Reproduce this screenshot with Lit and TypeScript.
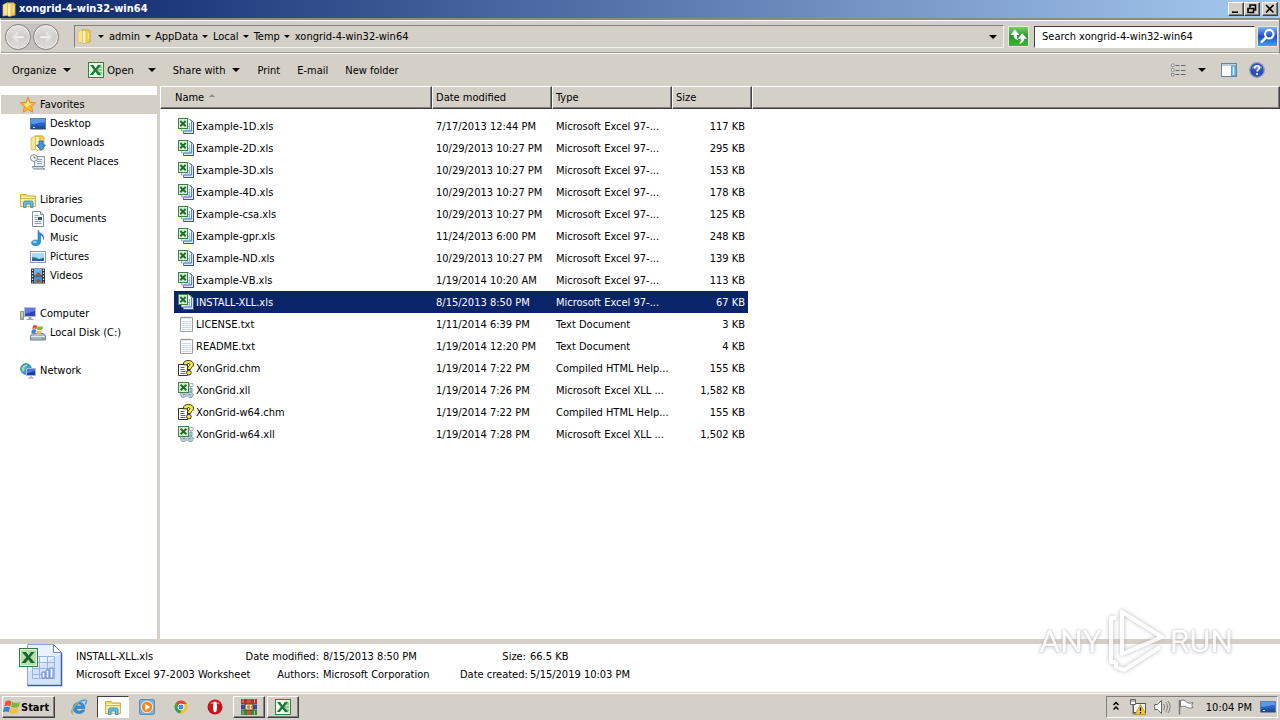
import { LitElement, html, svg, css, nothing } from "lit";
import { customElement, property, state } from "lit/decorators.js";
import { classMap } from "lit/directives/class-map.js";

const sheetBook = svg`
  <path d="M5.500 1.500h7l3 3v11h-10z" fill="#dbe6fa" stroke="#5a7fc0"/>
  <path d="M3.500.5h7l3 3v9.500h-10z" fill="#f4f8ff" stroke="#8fabd8"/>
  <path d="M15.500 4.500v11h-10" fill="none" stroke="#34569c"/>
  <path d="M13.500 3.500v9.500h-8" fill="none" stroke="#5f83c4"/>
  <path d="M8 8.500h4.500M7 11h5.500M11.500 5v7" stroke="#9db6e4"/>
  <rect x=".5" y=".5" width="9" height="10" fill="#dcedd4" stroke="#3d8544"/>
  <path d="M2.300 3l5.400 5.200M7.700 3L2.300 8.200" stroke="#1c6e2c" stroke-width="1.900"/>`;

const folderBody = svg`
  <path d="M.5 2.500h6l1 1.500h8v10.500H.5z" fill="#f3d978" stroke="#cfa63c"/>
  <path d="M1.500 5h13v2h-13z" fill="#fff6cf"/>
  <path d="M.5 6.500h15v8H.5z" fill="#fae99e" stroke="#d9b550"/>`;

const tallFolder = svg`
  <path d="M1 3l5-2.500v13.500L1 15z" fill="#f7e596" stroke="#d8b348" stroke-width=".7"/>
  <path d="M6 .8h6.500l1.500 1.700v11.500l-7 1.500-1-1.500z" fill="#efc84e" stroke="#c9992a" stroke-width=".7"/>
  <path d="M6 1.500l3 1v13l-3-1.500z" fill="#fdf2b8"/>
  <path d="M12 4v7" stroke="#fff3b0"/>`;

const flag = svg`
  <path d="M1.500 2.500c2.200-1.400 4-1.300 6 0L6.300 7.500C4.200 6.200 2.500 6.200.3 7.500z" fill="#e8562a"/>
  <path d="M8.200 2.900c2.500 1.200 5 1.200 7.800 0L14.700 7.800c-2.500 1.200-5 1.200-7.700 0z" fill="#7fb838"/>
  <path d="M0 8.500c2.200-1.200 4-1.100 6 0L4.800 13.300c-1.800-1.100-4-1.100-6 0z" fill="#3b7fd8"/>
  <path d="M6.800 8.800c2.500 1.200 5 1.200 7.600 0l-1.300 4.900c-2.500 1.200-5 1.200-7.500 0z" fill="#f8c22c"/>`;

const screenBlue = svg`
  <rect x=".5" y="2.500" width="15" height="10" fill="#2b62c4" stroke="#6a7fa6"/>
  <path d="M1 3h14v3.500C10 5.500 6 9 1 7.500z" fill="#5a98ec"/>
  <path d="M1 10.500C6 8 10 11.500 15 9v3.500H1z" fill="#1d4ea6"/>
  <path d="M.5 12h15v1.500H.5z" fill="#2c4a7e"/><path d="M3 11.500h2" stroke="#cfe2fa"/>`;

const chm = svg`
  <path d="M.5 4.500h9v11h-9z" fill="#fff" stroke="#333"/>
  <path d="M2.500 7.500h4M2.500 9.500h4M2.500 11.500h5M2.500 13.500h5" stroke="#667"/>
  <path d="M5.300 4.800C5.300 1.500 7.500.5 10.300.5c3 0 5.200 1.300 5.200 4 0 2.800-3 3-3 5H9.300c0-3 2.500-3.300 2.500-4.800 0-1.700-2.800-1.500-2.800.2z" fill="#ffe92e" stroke="#222" stroke-width=".9"/>
  <circle cx="10.900" cy="12.700" r="2.300" fill="#ffe92e" stroke="#222" stroke-width=".9"/>`;

const xll = svg`
  <path d="M11.500 1.500h3.500v3h-3.500z" fill="#fff" stroke="#90a0ae" stroke-width=".8"/>
  <path d="M2 12l2-2h9l2.500 2-1.500 3.500h-3l-1.500-1.500H8L6.500 15.500H4z" fill="#b9c9d6" stroke="#8599aa" stroke-width=".8"/>
  <path d="M12 6h2v4h-2zM5 12.500h2M10.500 12.500h2" stroke="#6f91ad" fill="#cfe0ec"/>
  <rect x=".5" y=".5" width="10" height="10" fill="#dcedd4" stroke="#3d8544"/>
  <path d="M2.600 2.800l5.800 5.400M8.400 2.800L2.600 8.200" stroke="#1c6e2c" stroke-width="1.900"/>`;

const txt = svg`
  <path d="M2.500 1.500h12v14h-12z" fill="#fbfcfd" stroke="#9a9fa6"/>
  <path d="M4 .5v2M6 .5v2M8 .5v2M10 .5v2M12 .5v2" stroke="#8b9096" stroke-width=".8"/>
  <path d="M4 5.500h9M4 7.500h9M4 9.500h9M4 11.500h9M4 13.500h9" stroke="#c6d0da" stroke-width=".8"/>`;

const excelTile = svg`
  <rect x=".5" y=".5" width="15" height="15" fill="#f3faef" stroke="#2e8540"/>
  <path d="M9.500 2h5v12h-5z" fill="#cfe6c6"/>
  <path d="M10 5h4M10 8h4M10 11h4" stroke="#5fa565"/>
  <path d="M2 3h3.200l2.300 3.300L9.900 3H13L9.200 8l4 5H9.900L7.400 9.700 5 13H1.800l4-5z" fill="#1c7a35"/>`;

const ICONS: Record<string, unknown> = {
  xls: sheetBook,
  txt,
  chm,
  xll,
  excel: excelTile,
  tallFolder,
  flag,
  desktop: screenBlue,
  star: svg`<path d="M8 .3l2.200 5 5.500.6-4.100 3.700 1.200 5.600L8 12.400l-4.800 2.800 1.200-5.600L.3 5.900l5.500-.6z" fill="#fdb62f" stroke="#e08a14" stroke-width=".9"/>
    <path d="M8 3l1.300 3.500 3 .3-5.800 3.400-2.500-3.400 2.700-.3z" fill="#ffe48a"/>`,
  downloads: svg`${tallFolder}<path d="M9 6h4v4h2.500L11 15.500 6.500 10H9z" fill="#3c9be0" stroke="#1c62ac" stroke-width=".8"/>`,
  recent: svg`<path d="M4.500 2.500h10v10h-10z" fill="#e7eff4" stroke="#8d9aa4"/>
    <path d="M7 5.500h5M7 7.500h5M7 9.500h5" stroke="#8fa7b6"/>
    <path d="M2.500 12.500h10c0 1.500.5 2.500 2.500 2.500H4.500c-1.500 0-2-1-2-2.500z" fill="#d2dce2" stroke="#7d8c96"/>
    <circle cx="4" cy="4" r="3.400" fill="#f8fafb" stroke="#82909a"/><path d="M4 2v2h1.800" stroke="#555" fill="none" stroke-width=".8"/>`,
  libraries: svg`${folderBody}<path d="M3.500 15.500v-4.500C3.500 9.500 4.500 9 6 9h4.500c1.500 0 2.500.5 2.500 2v4.500h-2.500V12H6v3.500z" fill="#63bde8" stroke="#2d86bd" stroke-width=".8"/>`,
  documents: svg`<path d="M2.500.5h8l3 3v12h-11z" fill="#fafcff" stroke="#7d8ea6"/>
    <path d="M10.500.5v3h3" fill="#d4deec" stroke="#7d8ea6"/><path d="M4.500 4.500h4M4.500 6.500h3M4.500 8.500h3M4.500 10.500h7M4.500 12.500h7" stroke="#92a0b8"/>
    <path d="M8 6h4v3H8z" fill="#2f4d80"/>`,
  music: svg`<path d="M8.500.5c.5 3 6.500 3.500 5 9 .2-3-1.500-4-3-4.300v7C10 17 1 16.500 1.500 12.500 1.800 10 6 9.300 8 10.500V.5z" fill="#2e93dc" stroke="#1668ab" stroke-width=".6"/>
    <ellipse cx="4.800" cy="12" rx="2" ry="1.200" fill="#8fd0f8"/>`,
  pictures: svg`<rect x=".5" y="2.500" width="15" height="11" fill="#fff" stroke="#8a97a6"/>
    <path d="M2 4h12v8H2z" fill="#a7dcf6"/><path d="M2 8l4 .5L9 10l5-1.500V12H2z" fill="#2e7f86"/><path d="M2 10.500h12V12H2z" fill="#1b5f9a"/>`,
  videos: svg`<path d="M1 .5h14v15H1z" fill="#26303c"/><path d="M4 1h8v6.500H4z" fill="#6eb4e6"/><path d="M4 8.500h8V15H4z" fill="#4c92d0"/>
    <path d="M6 6l2-2 3 2v1.500H6zM6 13l2-2 3 2v1.500H6z" fill="#a3552e"/>
    <path d="M2.500 1.500v13M13.500 1.500v13" stroke="#e6edf4" stroke-width="1.300" stroke-dasharray="1.500 1.500"/>`,
  computer: svg`<path d="M.5 5.500h3v8h-3z" fill="#c6d0b8" stroke="#8b9580"/><path d="M2 11v1.500" stroke="#4aa82a"/>
    <rect x="4.500" y="1.500" width="11" height="9" fill="#2d44b8" stroke="#b9bfca"/><path d="M5 2h10v3L5 8z" fill="#5f7be4"/>
    <path d="M9 11h2v2H9zM6.500 13.500h7" stroke="#9aa2ae" fill="#aab"/>`,
  disk: svg`<path d="M.5 11l2-2.500h11l2 2.500v4H.5z" fill="#a9b9c4" stroke="#6d808e"/><path d="M1 11.500h14" stroke="#dfe8ee"/><path d="M11.500 13.500h2.500" stroke="#3bbf4a"/>
    <g transform="translate(2 -1) scale(.7)">${flag}</g>`,
  network: svg`<circle cx="6" cy="6" r="5.400" fill="#3aa0dc" stroke="#1c6aa8" stroke-width=".7"/>
    <path d="M2 4.500C3.500 2 6 1 8 1.500 7 3.500 4.500 3.500 4.500 6S3 9 1.500 8z" fill="#a7dd8c"/>
    <rect x="6.500" y="5.500" width="9" height="7" fill="#1d39a8" stroke="#aeb9d2"/><path d="M7 6h8v2L7 10.500z" fill="#4c74dd"/><path d="M11 13v1.500M8.500 15h5" stroke="#7d8ca6"/>`,
  back: svg`<path d="M8 4L4 8l4 4M4.500 8H13" fill="none" stroke="#efeeeb" stroke-width="2"/><path d="M8 4L4 8l4 4" fill="none" stroke="#bdbcb9" stroke-width=".5"/>`,
  forward: svg`<path d="M8 4l4 4-4 4M11.500 8H3" fill="none" stroke="#efeeeb" stroke-width="2"/><path d="M8 4l4 4-4 4" fill="none" stroke="#bdbcb9" stroke-width=".5"/>`,
  refresh: svg`<path d="M4.500 1.500L.5 6.500h2.700c.3 2.500 2 4.500 5 5C6.700 10 6.500 8 6.500 6.500H9z" fill="#fff"/><path d="M11.500 5L7.500 10h2.700c.1 1.800-.3 3.400-1.700 5 3-.7 4.800-2.500 5-5h2.500z" fill="#fff"/>`,
  search: svg`<circle cx="9.700" cy="5.800" r="4" fill="none" stroke="#fff" stroke-width="2"/><path d="M6.800 8.800L2.500 13" stroke="#fff" stroke-width="2.400" stroke-linecap="round"/>`,
  views: svg`<g fill="#fff" stroke="#7a7f86" stroke-width=".8"><path d="M1.500 2h2.500v2.500H1.500zM1.500 6.700h2.500v2.500H1.500zM1.500 11.400h2.500v2.500H1.500z"/></g>
    <path d="M5.500 3.500h4M11 3.500h4.500M5.500 8.500h4M11 8.500h4.500M5.500 12.500h4M11 12.500h4.500" stroke="#5e666f"/>`,
  pane: svg`<rect x=".5" y="1.500" width="15" height="13" fill="#fff" stroke="#5b86a8"/><path d="M1 2h14v2H1z" fill="#b6cfe0"/><path d="M10.500 4h4.500v10h-4.500z" fill="#7cc3e8" stroke="#4c8db6" stroke-width=".8"/><path d="M12.500 5v8" stroke="#d9f1fc"/>`,
  help: svg`<circle cx="8" cy="8" r="7.300" fill="#2b50b4" stroke="#8f98b8" stroke-width="1.200"/><path d="M2.500 6a6 5 0 0111 0c-3 2-8 2-11 0z" fill="#6b8ee0"/>
    <path d="M5.700 6.300c0-3.400 4.800-3.200 4.800-.5 0 1.800-2.400 1.800-2.400 3.700" fill="none" stroke="#fff" stroke-width="1.700"/><circle cx="8.100" cy="12" r="1.100" fill="#fff"/>`,
  bigSheet: svg`<path d="M11.500.5h26l8 8v33h-34z" fill="#e9f1fe" stroke="#8aa6d8"/>
    <path d="M12 28L45 10v31H12z" fill="#cbdcf8" opacity=".7"/><path d="M37.500.5v8h8z" fill="#fff" stroke="#6689c6"/>
    <path d="M45.500 9v32.500h-34" fill="none" stroke="#3b5fa6" stroke-width="1.500"/>
    <g stroke="#9ab4e2" fill="none"><path d="M16.500 12.500h22v22h-22zM16.500 18.500h22M16.500 24.500h22M16.500 30.500h22M23.500 12v22M31.500 12v22"/></g>
    <path d="M26 34v-6h3v6zM30 34v-8h3v8zM34 34V24h3v10z" fill="#f8fbff" stroke="#5e83c8"/>
    <rect x="3.500" y="4.500" width="18" height="18" fill="#e3f2dc" stroke="#2f7f38"/><path d="M5 6h15v15H5z" fill="#b8dcab"/>
    <path d="M6 8h4l2.500 3.500L15 8h3.500l-4.400 5.300L19 19h-4.200l-2.500-3.400L9.500 19h-4l4.800-5.700z" fill="#15682a"/>`,
  ie: svg`<path d="M14 9.500H5.500c.2 3 4.200 3.600 5.200 1.600h3.100C12.500 15.500 3 16.300 2 9.500 1.700 1.500 14 1 14 9.500zM5.600 7h5c-.2-2.600-4.600-2.800-5 0z" fill="#2e8fe0" stroke="#1b66b4" stroke-width=".5"/>
    <path d="M2 15C-1.500 13 3.500 5.500 9 2.500s8.500-1.500 5 3" fill="none" stroke="#4aa0e6" stroke-width="1.500"/>
    <path d="M2 15C-1 13 3 6.500 7.500 3.400" fill="none" stroke="#f0b62c" stroke-width="1"/>`,
  media: svg`<rect x=".7" y=".7" width="14.600" height="14.600" rx="1" fill="#7fb9e6" stroke="#4a7fb6"/><circle cx="8" cy="8" r="5.700" fill="#f38a1c" stroke="#fff" stroke-width=".8"/><path d="M6.300 4.800L11.300 8l-5 3.200z" fill="#fff"/>`,
  chrome: svg`<circle cx="8" cy="8" r="6.500" fill="#f2c42a"/><path d="M8 8L2.400 4.700A6.500 6.500 0 0113.800 5H8z" fill="#dc4a38"/><path d="M8 8L2.400 4.700A6.500 6.500 0 007 14.400L10 9z" fill="#35a352"/><circle cx="8" cy="8" r="3" fill="#4a86e8" stroke="#fff"/>`,
  opera: svg`<ellipse cx="8" cy="8" rx="7.500" ry="7.500" fill="#c8141c"/><path d="M3 5c1-3 7-4.500 10 0z" fill="#ec6a66"/><ellipse cx="8" cy="8" rx="2" ry="5.300" fill="#fff"/>`,
  winrar: svg`<path d="M0 0h16v5H0z" fill="#b8322c"/><path d="M0 5.500h16v5H0z" fill="#39479e"/><path d="M0 11h16v5H0z" fill="#2f8a3c"/>
    <path d="M6 0h4v16H6z" fill="#c9503a"/><path d="M4 5h8v6H4z" fill="#ecd9a0" stroke="#6e3c18"/><path d="M6 8h1M8 6.500v3M10 8h1" stroke="#6e3c18"/><path d="M2 0v4M13.500 0v4M2 12v4M13.500 12v4" stroke="#f0c3a8" stroke-width=".7"/>`,
  chevrons: svg`<path d="M5.500 6L8 3.500 10.500 6M5.500 10.500L8 8l2.500 2.500" fill="none" stroke="#000" stroke-width="1.500"/>`,
  netWarn: svg`<rect x="3.500" y="4.500" width="12" height="9" fill="#f5f5f5" stroke="#555"/><path d="M.5.5h5v5h-5z" fill="#fff" stroke="#666"/><path d="M2 0v3M4 0v3M3 6v9h4" stroke="#666" fill="none"/>
    <path d="M10.500 5.500L16 15.500H5z" fill="#f9cf1c" stroke="#a98200" stroke-width=".7"/><path d="M10.500 8.500v3.500M10.500 13v1.500" stroke="#000" stroke-width="1.300"/>`,
  speaker: svg`<path d="M.7 5.500h3L7.500 1.500v13L3.700 10.500h-3z" fill="#fff" stroke="#666"/><path d="M9.500 5c1.300 1.800 1.300 4.200 0 6M11.700 3.300c2.300 2.800 2.300 6.600 0 9.400M13.800 2c3 3.600 3 8.400 0 12" fill="none" stroke="#777"/>`,
  action: svg`<path d="M1.500 1v14.500" stroke="#777" stroke-width="1.500"/><path d="M2.500 1.500c2.500-1 4.500 0 6 1.500 2 1.500 4 1.500 6.500.5-1.300 1.800-1.500 3.500 0 5-3 1-5 .8-6.500-.5-1.500-1.200-3.500-1-6 0z" fill="#fff" stroke="#777"/>`,
};

const icon = (name: string, size = 16, box = 16) =>
  html`<svg class="icon" width=${size} height=${size} viewBox="0 0 ${box} ${box}" aria-hidden="true">${ICONS[name]}</svg>`;

const caret = (small = false) => html`<i class=${classMap({ caret: true, small })}></i>`;

interface FileRow { name: string; date: string; type: string; size: string; icon: string }
const XLS = "Microsoft Excel 97-...";
const FILES: FileRow[] = [
  { name: "Example-1D.xls", date: "7/17/2013 12:44 PM", type: XLS, size: "117 KB", icon: "xls" },
  { name: "Example-2D.xls", date: "10/29/2013 10:27 PM", type: XLS, size: "295 KB", icon: "xls" },
  { name: "Example-3D.xls", date: "10/29/2013 10:27 PM", type: XLS, size: "153 KB", icon: "xls" },
  { name: "Example-4D.xls", date: "10/29/2013 10:27 PM", type: XLS, size: "178 KB", icon: "xls" },
  { name: "Example-csa.xls", date: "10/29/2013 10:27 PM", type: XLS, size: "125 KB", icon: "xls" },
  { name: "Example-gpr.xls", date: "11/24/2013 6:00 PM", type: XLS, size: "248 KB", icon: "xls" },
  { name: "Example-ND.xls", date: "10/29/2013 10:27 PM", type: XLS, size: "139 KB", icon: "xls" },
  { name: "Example-VB.xls", date: "1/19/2014 10:20 AM", type: XLS, size: "113 KB", icon: "xls" },
  { name: "INSTALL-XLL.xls", date: "8/15/2013 8:50 PM", type: XLS, size: "67 KB", icon: "xls" },
  { name: "LICENSE.txt", date: "1/11/2014 6:39 PM", type: "Text Document", size: "3 KB", icon: "txt" },
  { name: "README.txt", date: "1/19/2014 12:20 PM", type: "Text Document", size: "4 KB", icon: "txt" },
  { name: "XonGrid.chm", date: "1/19/2014 7:22 PM", type: "Compiled HTML Help...", size: "155 KB", icon: "chm" },
  { name: "XonGrid.xll", date: "1/19/2014 7:26 PM", type: "Microsoft Excel XLL ...", size: "1,582 KB", icon: "xll" },
  { name: "XonGrid-w64.chm", date: "1/19/2014 7:22 PM", type: "Compiled HTML Help...", size: "155 KB", icon: "chm" },
  { name: "XonGrid-w64.xll", date: "1/19/2014 7:28 PM", type: "Microsoft Excel XLL ...", size: "1,502 KB", icon: "xll" },
];

const TREE: { label: string; icon: string; children: [string, string][] }[] = [
  { label: "Favorites", icon: "star", children: [["Desktop", "desktop"], ["Downloads", "downloads"], ["Recent Places", "recent"]] },
  { label: "Libraries", icon: "libraries", children: [["Documents", "documents"], ["Music", "music"], ["Pictures", "pictures"], ["Videos", "videos"]] },
  { label: "Computer", icon: "computer", children: [["Local Disk (C:)", "disk"]] },
  { label: "Network", icon: "network", children: [] },
];

const base = css`
  * { box-sizing: border-box; }
  .icon { display: block; flex: none; overflow: visible; }
  button {
    font: inherit; color: inherit; background: none; border: 0; padding: 0; margin: 0;
    display: flex; align-items: center; white-space: nowrap;
  }
  a { color: inherit; text-decoration: none; }
  ul { list-style: none; margin: 0; padding: 0; }
  .caret {
    display: block; flex: none; width: 0; height: 0;
    border: 4px solid transparent; border-top-color: #000; border-bottom: 0;
  }
  .caret.small { border-width: 3px; border-bottom: 0; }
  .raised {
    background: #d4d0c8; border: 1px solid; border-color: #fff #404040 #404040 #fff;
    box-shadow: inset -1px -1px 0 #808080;
  }
`;

@customElement("title-bar")
class TitleBar extends LitElement {
  static styles = [base, css`
    :host {
      display: flex; align-items: center; height: 18px; padding: 0 2px; gap: 2px; color: #fff;
      background: linear-gradient(90deg, #0a246a, #a6caf0);
    }
    h1 { flex: 1; margin: 0; font-size: 11px; font-weight: bold; line-height: 18px; }
    .controls { display: flex; }
    .controls button { width: 16px; height: 14px; justify-content: center; }
    .controls button:last-child { margin-left: 2px; }
  `];
  render() {
    const b = (label: string, d: string) => html`<button class="raised" aria-label=${label}>
      <svg class="icon" width="10" height="10" viewBox="0 0 10 10"><path d=${d} fill="none" stroke="#000" stroke-width="1.600"/></svg></button>`;
    return html`${icon("tallFolder", 15)}<h1>xongrid-4-win32-win64</h1>
      <div class="controls">
        ${b("Minimize", "M1 8.200h6")}
        ${b("Restore", "M3 3.500V1h5.500v5H6.500M1 4.500h5.500v4H1z")}
        ${b("Close", "M1 1l7.500 7.500M8.500 1L1 8.500")}
      </div>`;
  }
}

@customElement("nav-bar")
class NavBar extends LitElement {
  static styles = [base, css`
    :host {
      display: flex; align-items: center; height: 36px; padding: 0 1px 0 4px;
      border-top: 2px solid #8c8982; border-bottom: 1px solid #fff; box-shadow: inset 0 1px 0 #fff, inset 0 -1px 0 #a09d96;
      border-left: 1px solid #fff; border-right: 1px solid #808080;
    }
    .history { display: flex; gap: 2px; border-radius: 13px; background: #c3c1bc; }
    .history button {
      width: 26px; height: 26px; justify-content: center; border-radius: 50%;
      border: 1px solid #85837f; box-shadow: inset 0 0 0 1px #f2f1ee;
      background: linear-gradient(#e4e3e0, #cfcecb 50%, #dddcd8);
    }
    .address {
      flex: 1; display: flex; align-items: center; height: 23px; margin-left: 15px; padding-right: 6px;
      border: 1px solid; border-color: #808080 #f4f2ee #f4f2ee #808080;
    }
    .address ul { flex: 1; display: flex; margin-left: 2px; }
    .address li { display: flex; align-items: center; }
    .sep { width: 15px; height: 19px; justify-content: center; }
    .first .sep { width: 17px; }
    .refresh, .go { width: 21px; height: 21px; justify-content: center; border: 1px solid #e9e7e2; }
    .refresh { margin: 0 5px 0 4px; background: linear-gradient(#7bcf6a, #1f9a2e 50%, #43b53e); }
    .go { margin-left: 2px; background: linear-gradient(#7fb4f0, #1c50c8 50%, #39a6e8); }
    input {
      width: 221px; height: 22px; padding: 0 0 0 7px; margin: 0; font: inherit; color: #000; background: #fff;
      border: 1px solid; border-color: #404040 #fff #fff #404040; border-radius: 0; outline: 0;
    }
    input::placeholder { color: #000; opacity: 1; }
  `];
  render() {
    const crumbs = ["admin", "AppData", "Local", "Temp", "xongrid-4-win32-win64"];
    return html`
      <div class="history">
        <button aria-label="Back">${icon("back", 18)}</button>
        <button aria-label="Forward">${icon("forward", 18)}</button>
      </div>
      <div class="address">
        <ul>
          <li class="first">${icon("tallFolder", 15)}<button class="sep" aria-label="Locations">${caret(true)}</button></li>
          ${crumbs.map((c, i) => html`<li><a href="#">${c}</a>${i < crumbs.length - 1
            ? html`<button class="sep" aria-label="Subfolders of ${c}">${caret(true)}</button>` : nothing}</li>`)}
        </ul>
        <button aria-label="Previous locations">${caret()}</button>
      </div>
      <button class="refresh" aria-label="Refresh">${icon("refresh", 17)}</button>
      <input type="search" aria-label="Search" placeholder="Search xongrid-4-win32-win64">
      <button class="go" aria-label="Go">${icon("search", 17)}</button>`;
  }
}

@customElement("command-bar")
class CommandBar extends LitElement {
  static styles = [base, css`
    :host { display: flex; align-items: center; height: 32px; padding: 0 15px 0 12px; }
    .left, .right { display: flex; align-items: center; }
    .left { flex: 1; gap: 17px; }
    .left button { gap: 7px; }
    .left .open { gap: 3px; }
    .open .caret { margin-left: 11px; }
    .right { gap: 12px; }
    .right .more { margin-right: 3px; }
  `];
  render() {
    return html`
      <div class="left">
        <button>Organize ${caret()}</button>
        <button class="open">${icon("excel")} Open ${caret()}</button>
        <button>Share with ${caret()}</button>
        <button>Print</button>
        <button>E-mail</button>
        <button>New folder</button>
      </div>
      <div class="right">
        <button aria-label="Change your view">${icon("views")}</button>
        <button class="more" aria-label="More view options">${caret()}</button>
        <button aria-label="Preview pane">${icon("pane")}</button>
        <button aria-label="Help">${icon("help")}</button>
      </div>`;
  }
}

@customElement("folder-tree")
class FolderTree extends LitElement {
  static styles = [base, css`
    :host {
      display: block; width: 160px; flex: none; padding: 9px 0 0 1px; line-height: 16px;
      border-right: 3px solid #d4d0c8; background: #fff;
    }
    section { margin-bottom: 19px; }
    a { display: flex; align-items: center; gap: 4px; height: 19px; padding-left: 19px; }
    li a { padding-left: 29px; }
    .current { background: #d4d0c8; }
  `];
  render() {
    return html`<nav aria-label="Folders">${TREE.map((g, i) => html`<section>
      <a href="#" class=${classMap({ current: i === 0 })}>${icon(g.icon)}${g.label}</a>
      <ul>${g.children.map(([label, ic]) => html`<li><a href="#">${icon(ic)}${label}</a></li>`)}</ul>
    </section>`)}</nav>`;
  }
}

@customElement("file-list")
class FileList extends LitElement {
  @property({ type: Number }) selected = 8;
  static styles = [base, css`
    :host { display: block; flex: 1; min-width: 0; background: #fff; }
    table { width: 100%; table-layout: fixed; border-collapse: separate; border-spacing: 0; }
    th, td { padding: 0 4px; text-align: left; white-space: nowrap; font-weight: normal; overflow: hidden; }
    th {
      height: 23px; background: #d4d0c8; border: 1px solid; border-color: #fff #404040 #404040 #fff;
      box-shadow: inset -1px -1px 0 #808080; padding: 0 3px; line-height: 16px;
    }
    th.name { padding-left: 14px; }
    .sort { display: inline-block; margin: 0 0 4px 5px; border: 3px solid transparent; border-top: 0; border-bottom-color: #8c8a85; }
    tbody::before { content: ""; display: block; height: 6px; }
    td { height: 22px; }
    td:nth-child(5) { text-align: right; padding-right: 3px; }
    .file { display: flex; align-items: center; gap: 2px; }
    .selected td:nth-child(n + 2):nth-child(-n + 5) { background: #0a246a; color: #fff; }
    .pad { width: 14px; } .c1 { width: 258px; } .c2 { width: 120px; } .c3 { width: 76px; } .c4 { width: 4px; }
  `];
  render() {
    return html`<table>
      <colgroup><col class="pad"><col class="c1"><col class="c2"><col class="c2"><col class="c3"><col class="c4"><col></colgroup>
      <thead><tr>
        <th class="name" colspan="2" scope="col" aria-sort="ascending">Name<i class="sort"></i></th>
        <th scope="col">Date modified</th><th scope="col">Type</th><th colspan="2" scope="col">Size</th><th></th>
      </tr></thead>
      <tbody>${FILES.map((f, i) => html`<tr class=${classMap({ selected: i === this.selected })}
        @click=${() => this.dispatchEvent(new CustomEvent("pick", { detail: i }))}>
        <td></td><td><span class="file">${icon(f.icon)}${f.name}</span></td>
        <td>${f.date}</td><td>${f.type}</td><td>${f.size}</td>
      </tr>`)}</tbody>
    </table>`;
  }
}

@customElement("details-pane")
class DetailsPane extends LitElement {
  static styles = [base, css`
    :host {
      display: flex; height: 53px; gap: 12px; padding-left: 16px;
      border-top: 5px solid #d4d0c8; background: #fff;
    }
    .grid {
      display: grid; grid-template-columns: 150px 97px 137px 70px auto; grid-auto-rows: 18px;
      padding-top: 4px; white-space: nowrap; line-height: 18px;
    }
    .label { text-align: right; padding-right: 4px; }
  `];
  render() {
    return html`${icon("bigSheet", 48, 48)}
      <div class="grid">
        <span>INSTALL-XLL.xls</span>
        <span class="label">Date modified:</span><span>8/15/2013 8:50 PM</span>
        <span class="label">Size:</span><span>66.5 KB</span>
        <span>Microsoft Excel 97-2003 Worksheet</span>
        <span class="label">Authors:</span><span>Microsoft Corporation</span>
        <span class="label">Date created:</span><span>5/15/2019 10:03 PM</span>
      </div>`;
  }
}

@customElement("task-bar")
class TaskBar extends LitElement {
  static styles = [base, css`
    :host {
      display: flex; align-items: center; height: 28px; padding: 2px 2px 0;
      background: #d4d0c8; box-shadow: inset 0 1px 0 #d4d0c8, inset 0 2px 0 #fff;
    }
    .start { width: 53px; height: 22px; padding-left: 1px; gap: 1px; font-weight: bold; font-size: 11px; }
    .apps { flex: 1; display: flex; gap: 2px; margin-left: 8px; }
    .apps button { width: 32px; height: 22px; justify-content: center; }
    .apps .pressed { background: #fff; border: 1px solid; border-color: #404040 #fff #fff #404040; }
    .tray {
      display: flex; align-items: center; height: 22px; gap: 8px; padding-left: 1px;
      border: 1px solid; border-color: #808080 #fff #fff #808080;
    }
    .tray time { margin-left: 4px; }
    .tray .show { margin-right: 1px; }
    .tray .more { margin-right: -2px; }
  `];
  render() {
    const apps: [string, string, string][] = [
      ["Internet Explorer", "ie", ""], ["Windows Explorer", "libraries", "pressed"], ["Media Player", "media", ""],
      ["Chrome", "chrome", ""], ["Opera", "opera", ""], ["WinRAR", "winrar", "raised"], ["Excel", "excel", "raised"],
    ];
    return html`
      <button class="start raised">${icon("flag", 16)}Start</button>
      <div class="apps">${apps.map(([label, ic, cls]) => html`<button class=${cls} aria-label=${label}>${icon(ic)}</button>`)}</div>
      <div class="tray">
        <button class="more" aria-label="Show hidden icons">${icon("chevrons")}</button>
        <button aria-label="Network">${icon("netWarn")}</button>
        <button aria-label="Volume">${icon("speaker")}</button>
        <button aria-label="Action Center">${icon("action")}</button>
        <time>10:04 PM</time>
        <button class="show" aria-label="Show desktop">${icon("desktop")}</button>
      </div>`;
  }
}

@customElement("app-root")
class AppRoot extends LitElement {
  @state() private selected = 8;
  static styles = [base, css`
    :host {
      display: flex; flex-direction: column; position: relative; height: 100vh; overflow: hidden;
      background: #d4d0c8; color: #000;
      font: 11px/15px "DejaVu Sans Condensed", "DejaVu Sans", sans-serif;
    }
    main { flex: 1; display: flex; min-height: 0; }
    .mark {
      position: absolute; right: 47px; bottom: 46px; display: flex; align-items: center; gap: 6px;
      font: 32px/66px Roboto, sans-serif; color: #fff; opacity: 0.8; pointer-events: none;
      text-shadow: 0 0 2px #a8a8a8, 0 1px 4px #b8b8b8;
    }
    .mark svg { filter: drop-shadow(0 0 2px #a8a8a8); }
  `];
  render() {
    return html`
      <title-bar></title-bar>
      <nav-bar></nav-bar>
      <command-bar></command-bar>
      <main>
        <folder-tree></folder-tree>
        <file-list .selected=${this.selected} @pick=${(e: CustomEvent) => (this.selected = e.detail)}></file-list>
      </main>
      <details-pane></details-pane>
      <task-bar></task-bar>
      <div class="mark"><span>ANY</span>
        <svg width="56" height="66" viewBox="0 0 56 66" fill="none" stroke="#fff" stroke-width="4" stroke-linejoin="round">
          <path d="M14 4v42L54 29z"/><path d="M8 10H3v44h5"/><path d="M8 54v5l8 3 36-23"/>
        </svg><span>RUN</span></div>`;
  }
}
